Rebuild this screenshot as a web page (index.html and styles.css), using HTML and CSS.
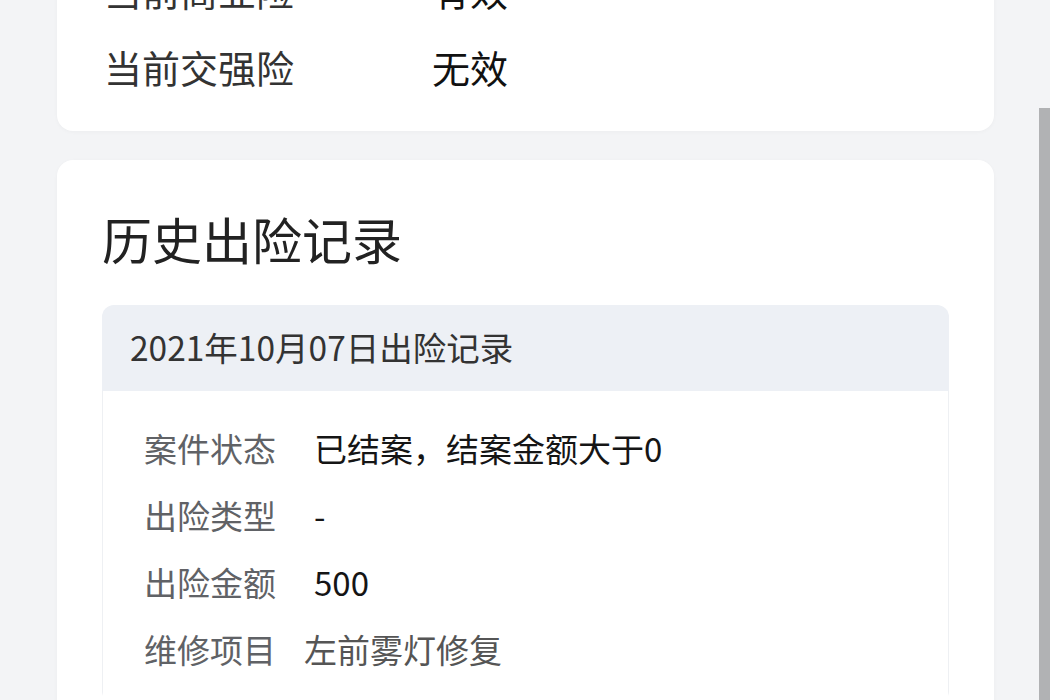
FILE: index.html
```
<!DOCTYPE html>
<html lang="zh-CN">
<head>
    <meta charset="UTF-8">
    <meta name="viewport" content="width=device-width, initial-scale=1.0">
    <title>车辆保险记录</title>
    <link rel="stylesheet" href="styles.css">
</head>
<body>
    <div class="page">
        <!-- Insurance Status Card -->
        <div class="card card-status">
            <div class="status-row">
                <span class="status-label">当前商业险</span>
                <span class="status-value">有效</span>
            </div>
            <div class="status-row">
                <span class="status-label">当前交强险</span>
                <span class="status-value">无效</span>
            </div>
        </div>

        <!-- Claim History Card -->
        <div class="card card-history">
            <h2 class="card-title">历史出险记录</h2>
            <div class="record">
                <div class="record-head">2021年10月07日出险记录</div>
                <div class="record-body">
                    <div class="record-row">
                        <span class="record-label">案件状态</span>
                        <span class="record-value">已结案，结案金额大于0</span>
                    </div>
                    <div class="record-row">
                        <span class="record-label">出险类型</span>
                        <span class="record-value">-</span>
                    </div>
                    <div class="record-row">
                        <span class="record-label">出险金额</span>
                        <span class="record-value">500</span>
                    </div>
                    <div class="record-row">
                        <span class="record-label">维修项目</span>
                        <span class="record-value record-value-muted">左前雾灯修复</span>
                    </div>
                </div>
            </div>
        </div>
    </div>

    <!-- Scrollbar track -->
    <div class="scroll-track">
        <div class="scroll-thumb"></div>
    </div>
</body>
</html>
```

FILE: styles.css
```
html, body {
    height: 100%;
}

body {
    margin: 0;
    display: flex;
    overflow: hidden;
    background: #f3f4f6;
    font-family: "Noto Sans CJK SC", "Noto Sans", sans-serif;
}

.page {
    flex: 1;
    padding: 0 45px 0 57px;
    margin-top: -73px;
}

.card {
    background: #ffffff;
    border-radius: 16px;
    box-shadow: 0 1px 4px rgba(0, 0, 0, 0.03);
}

/* Status card */
.card-status {
    padding: 24px 47px 26px 47px;
}

.status-row {
    display: flex;
    align-items: center;
    height: 77px;
    font-size: 38px;
}

.status-label {
    width: 328px;
    color: #333333;
}

.status-value {
    color: #111111;
}

/* History card */
.card-history {
    margin-top: 29px;
    padding: 48px 45px 40px 45px;
}

.card-title {
    margin: 0;
    font-size: 50px;
    font-weight: 400;
    line-height: 60px;
    color: #222222;
}

.record {
    margin-top: 37px;
    border-radius: 12px;
    overflow: hidden;
}

.record-head {
    height: 86px;
    display: flex;
    align-items: center;
    padding-left: 28px;
    padding-bottom: 4px;
    box-sizing: border-box;
    background: #edf0f5;
    font-size: 33.5px;
    color: #333333;
}

.record-body {
    border: 1px solid #eef0f3;
    border-top: none;
    padding: 23px 0 20px 41px;
}

.record-row {
    display: flex;
    align-items: center;
    height: 67px;
    font-size: 33px;
}

.record-label {
    width: 132px;
    margin-right: 38px;
    color: #606266;
}

.record-value {
    color: #151515;
}

.record-value-muted {
    margin-left: -10px;
    color: #555555;
}

/* Scrollbar */
.scroll-track {
    width: 11px;
    padding-top: 108px;
    background: #f3f4f6;
}

.scroll-thumb {
    height: 100%;
    background: #b1b2b4;
}
```
